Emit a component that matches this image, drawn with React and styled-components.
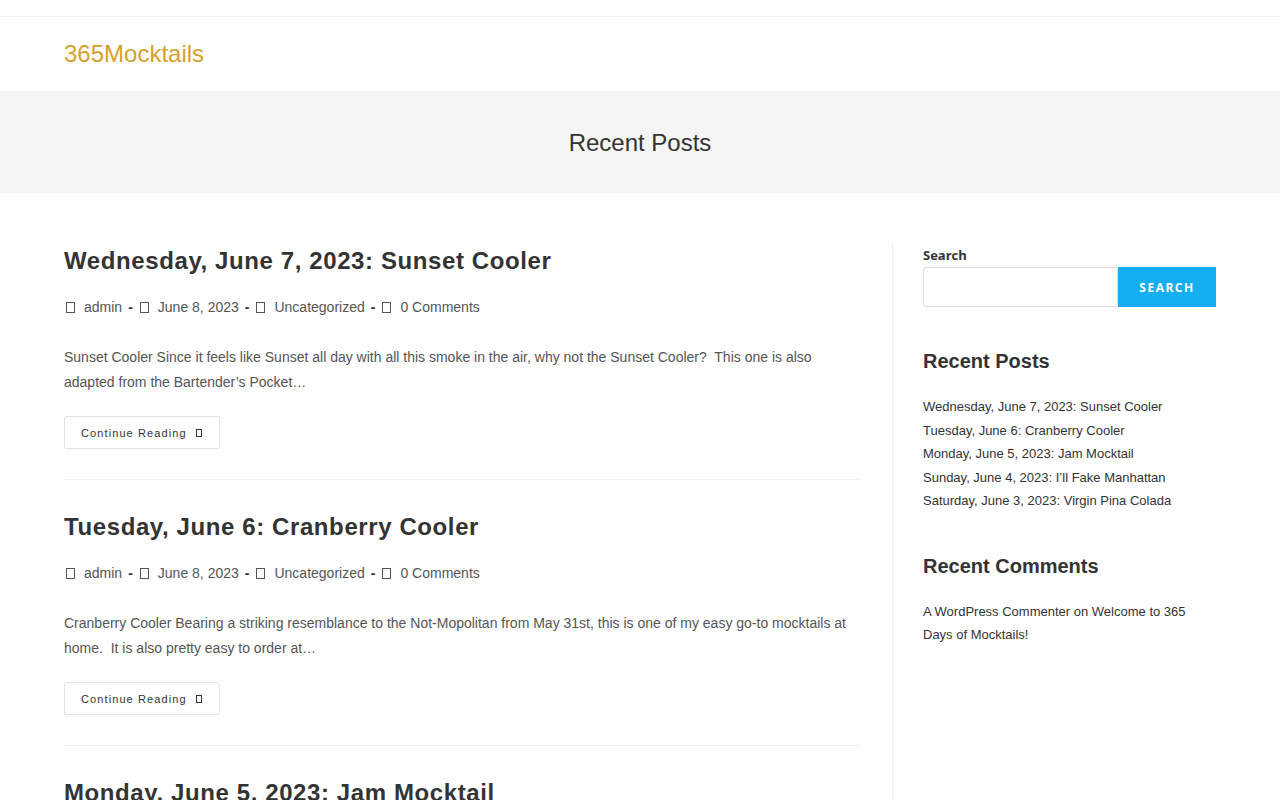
import React from 'react';
import styled, { createGlobalStyle } from 'styled-components';

const GlobalStyle = createGlobalStyle`
  html, body {
    margin: 0;
    padding: 0;
    background: #fff;
    font-family: "Liberation Sans", Arial, sans-serif;
    color: #333;
  }
  * { box-sizing: border-box; }
`;

const TopBar = styled.div`
  height: 17px;
  border-bottom: 1px solid #f1f1f1;
`;

const Header = styled.header`
  height: 74px;
  display: flex;
  align-items: center;
  padding: 0 64px;
`;

const Logo = styled.a`
  font-size: 24px;
  color: #d6a12b;
  text-decoration: none;
`;

const PageHeader = styled.div`
  height: 102px;
  background: #f5f5f5;
  border-top: 1px solid #f1f1f1;
  display: flex;
  align-items: center;
  justify-content: center;
`;

const PageTitle = styled.h1`
  margin: 0;
  font-size: 24px;
  font-weight: 400;
  color: #333;
`;

const Content = styled.div`
  display: flex;
  padding: 50px 64px 0;
`;

const Main = styled.main`
  width: 798px;
  margin-right: 30px;
`;

const Sidebar = styled.aside`
  flex: 1;
  border-left: 1px solid #f1f1f1;
  padding-left: 30px;
  min-height: 600px;
`;

const Post = styled.article`
  padding-bottom: 30px;
  margin-bottom: 30px;
  border-bottom: 1px solid #f1f1f1;
`;

const PostTitle = styled.h2`
  margin: 1px 0 17px;
  font-size: 24px;
  line-height: 34px;
  font-weight: 700;
  letter-spacing: 0.6px;
  color: #333;
`;

const Meta = styled.ul`
  list-style: none;
  margin: 0 0 26px;
  padding: 0;
  display: flex;
  align-items: center;
  font-size: 14px;
  line-height: 24px;
  color: #333;
`;

const MetaItem = styled.li`
  display: flex;
  align-items: center;
  color: #555;
`;

const Tofu = styled.span`
  display: inline-block;
  width: ${(p) => p.w || 9}px;
  height: ${(p) => p.h || 11}px;
  border: 1px solid ${(p) => p.c || '#555'};
  margin: ${(p) => p.m || '0 9px 0 2px'};
`;

const Dash = styled.span`
  margin: 0 5px 0 6px;
  color: #333;
  font-weight: 700;
`;

const Excerpt = styled.p`
  margin: 0 0 21px;
  font-size: 14px;
  line-height: 25px;
  color: #555;
`;

const ReadMore = styled.a`
  display: inline-flex;
  align-items: center;
  height: 33px;
  padding: 0 17px 0 16px;
  border: 1px solid #e4e4e4;
  border-radius: 2px;
  font-size: 11px;
  letter-spacing: 1.1px;
  color: #333;
  text-decoration: none;
`;

const Widget = styled.section`
  margin-bottom: ${(p) => p.gap || 38}px;
`;

const SearchLabel = styled.label`
  display: block;
  font-family: "Open Sans", sans-serif;
  font-weight: 700;
  font-size: 13px;
  color: #333;
  margin: 3px 0 3px;
`;

const SearchRow = styled.div`
  display: flex;
  width: 293px;
`;

const SearchInput = styled.input`
  flex: 1;
  min-width: 0;
  height: 40px;
  border: 1px solid #ddd;
  border-radius: 3px;
  padding: 6px 12px;
  font-size: 14px;
  outline: none;
`;

const SearchButton = styled.button`
  flex-shrink: 0;
  width: 98px;
  height: 40px;
  border: none;
  background: #13aff0;
  color: #fff;
  font-family: "Open Sans", sans-serif;
  font-size: 12px;
  font-weight: 700;
  letter-spacing: 1.5px;
  text-transform: uppercase;
`;

const WidgetTitle = styled.h3`
  margin: 0 0 19px;
  font-size: 20px;
  line-height: 30px;
  font-weight: 700;
  color: #333;
`;

const LinkList = styled.ul`
  list-style: none;
  margin: 0;
  padding: 0;
`;

const LinkItem = styled.li`
  font-size: 13px;
  line-height: 23.5px;
  color: #333;
`;

const CommentText = styled.p`
  margin: 0;
  font-size: 13px;
  line-height: 23px;
  color: #333;
`;

const posts = [
  {
    title: 'Wednesday, June 7, 2023: Sunset Cooler',
    excerpt:
      'Sunset Cooler Since it feels like Sunset all day with all this smoke in the air, why not the Sunset Cooler?\u00a0 This one is also adapted from the Bartender\u2019s Pocket\u2026',
  },
  {
    title: 'Tuesday, June 6: Cranberry Cooler',
    excerpt:
      'Cranberry Cooler Bearing a striking resemblance to the Not-Mopolitan from May 31st, this is one of my easy go-to mocktails at home.\u00a0 It is also pretty easy to order at\u2026',
  },
  {
    title: 'Monday, June 5, 2023: Jam Mocktail',
    excerpt:
      'Jam Mocktail This one is a little sweet, a little tart, and all kinds of fun.',
  },
];

const recent = [
  'Wednesday, June 7, 2023: Sunset Cooler',
  'Tuesday, June 6: Cranberry Cooler',
  'Monday, June 5, 2023: Jam Mocktail',
  'Sunday, June 4, 2023: I\u2019ll Fake Manhattan',
  'Saturday, June 3, 2023: Virgin Pina Colada',
];

const PostEntry = ({ post }) => (
  <Post>
    <PostTitle>{post.title}</PostTitle>
    <Meta>
      <MetaItem><Tofu />admin</MetaItem>
      <Dash>-</Dash>
      <MetaItem><Tofu />June 8, 2023</MetaItem>
      <Dash>-</Dash>
      <MetaItem><Tofu />Uncategorized</MetaItem>
      <Dash>-</Dash>
      <MetaItem><Tofu />0 Comments</MetaItem>
    </Meta>
    <Excerpt>{post.excerpt}</Excerpt>
    <ReadMore href="#">
      Continue Reading
      <Tofu w={6} h={8} c="#333" m="0 0 0 9px" />
    </ReadMore>
  </Post>
);

const App = () => (
  <>
    <GlobalStyle />
    <TopBar />
    <Header>
      <Logo href="#">365Mocktails</Logo>
    </Header>
    <PageHeader>
      <PageTitle>Recent Posts</PageTitle>
    </PageHeader>
    <Content>
      <Main>
        {posts.map((p) => (
          <PostEntry key={p.title} post={p} />
        ))}
      </Main>
      <Sidebar>
        <Widget gap={39}>
          <SearchLabel>Search</SearchLabel>
          <SearchRow>
            <SearchInput type="text" />
            <SearchButton>Search</SearchButton>
          </SearchRow>
        </Widget>
        <Widget>
          <WidgetTitle>Recent Posts</WidgetTitle>
          <LinkList>
            {recent.map((r) => (
              <LinkItem key={r}>{r}</LinkItem>
            ))}
          </LinkList>
        </Widget>
        <Widget>
          <WidgetTitle>Recent Comments</WidgetTitle>
          <CommentText>A WordPress Commenter on Welcome to 365 Days of Mocktails!</CommentText>
        </Widget>
      </Sidebar>
    </Content>
  </>
);

export default App;
